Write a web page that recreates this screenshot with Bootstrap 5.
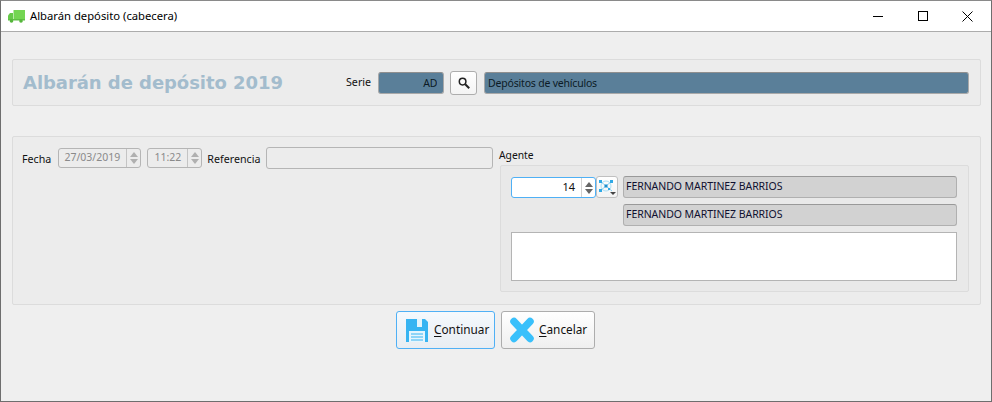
<!DOCTYPE html>
<html lang="es">
<head>
<meta charset="utf-8">
<title>Albarán depósito (cabecera)</title>
<link href="https://cdn.jsdelivr.net/npm/bootstrap@5.3.0/dist/css/bootstrap.min.css" rel="stylesheet">
<style>
html,body{height:100%;margin:0;background:#efefef}
body{font-family:"Noto Sans","Liberation Sans",sans-serif;font-size:10.7px;color:#111;overflow:hidden}
.win{width:992px;height:402px;border:1px solid #6e6e6e;border-top-color:#8a8a8a;background:#efefef}
.tbar{height:31px;background:#fff;border-bottom:1px solid #acacac;flex:none}
.tbar svg.ico{margin-left:7px;margin-right:5px}
.ttl{font-size:11.25px;color:#000}
.wbtn{width:45px;height:30px;background:none;border:0;padding:0}
.wgroup{margin-right:1px;margin-top:-2px}
.panel1{margin:27px 10px 0 11px;height:47px;border:1px solid #dcdcdc;border-radius:2px;background:#ececec;padding:0 11px 0 10px}
.hd{font-family:"DejaVu Sans",sans-serif;font-weight:700;font-size:18px;letter-spacing:-.05px;color:#a3bccd;width:323px;white-space:nowrap}
.fld{height:22px;border:1px solid #a9a9a9;border-top-color:#8f8f8f;border-radius:3px;padding:0 3px;font:inherit;color:#111;outline:0;min-width:0}
.blue{background:#5a7f99;color:#0c1b26;font-size:10.5px;letter-spacing:-.2px}
.serie{width:66px;text-align:right;padding-right:6px;margin-left:7px}
.sbtn{width:27px;height:24px;padding:0;margin:0 7px 0 6px;background:linear-gradient(#fff,#f4f4f4);border:1px solid #adadad;border-radius:3px;display:flex;align-items:center;justify-content:center}
.wide{flex:1 1 auto}
.panel2{margin:30px 10px 0 11px;height:169px;border:1px solid #dcdcdc;border-radius:2px;background:#ececec;padding:10px 12px 0 9px}
.left{width:476px;flex:none}
.spin{height:20px;border:1px solid #b5b5b5;border-radius:3px;background:#ececec;color:#8a8a8a;margin-top:1px;font-size:10.5px}
.spin span.val{flex:1;text-align:right;padding-right:6px;white-space:nowrap}
.arrows{width:14px;flex:none;border-left:1px solid #c4c4c4;height:100%;display:flex;flex-direction:column;align-items:center;justify-content:center;gap:2px}
.up{width:0;height:0;border-left:4.5px solid transparent;border-right:4.5px solid transparent;border-bottom:5px solid #b0b0b0}
.dn{width:0;height:0;border-left:4.5px solid transparent;border-right:4.5px solid transparent;border-top:5px solid #b0b0b0}
.date{width:83px;margin-left:7px}
.time{width:55px;margin-left:6px}
.ref{width:227px;margin-left:6px;background:#ececec;border-color:#b5b5b5;height:22px}
.ml5{margin-left:5px}
.right{width:470px;flex:none}
.agl{height:18px;margin-top:-1px;margin-left:1px;line-height:18px;font-size:10.3px}
.panel3{margin-top:1px;margin-left:2px;width:469px;height:127px;border:1px solid #dcdcdc;border-radius:2px;background:#e9e9e9;padding:10px 10px 0 10px}
.live{width:85px;height:21px;background:#fff;border:1px solid #4fb0f5;border-radius:3px;color:#111;margin-top:1px;font-size:11px}
.live .arrows{border-left-color:#d0d0d0}
.live .up,.live .dn{border-bottom-color:#666;border-top-color:#666}
.ibtn{width:22px;height:22px;margin-left:0;padding:0;background:linear-gradient(#fff,#f3f3f3);border:1px solid #c0c0c0;border-radius:3px;display:flex;align-items:center;justify-content:center}
.grey{background:#d2d2d2;color:#101030;height:22px;border:1px solid #b0b0b0;border-top-color:#999;font-size:10.5px;letter-spacing:-.06px;padding:0 1px 3px 2px;width:334px;flex:none}
.r1{margin-left:5px}
.r2{margin-left:112px;margin-top:6px}
.memo{display:block;margin-top:6px;width:446px;height:49px;background:#fff;border:1px solid #b4b4b4;resize:none;outline:0}
.acts{margin-top:6px;margin-left:-1px;gap:6px}
.bt{height:38px;padding:0;font:inherit;font-size:11.8px;color:#111;background:linear-gradient(#fff,#efefef);border:1px solid #adadad;border-radius:3px;display:flex;align-items:center}
.bt u{text-underline-offset:2px}
.bok{width:99px;border-color:#4fb0f5;background:linear-gradient(#f4f9fd,#e8edf2);padding-left:9px;gap:6px}
.bko{width:94px;padding-left:8px;gap:5px}
</style>
</head>
<body>
<div class="win d-flex flex-column">
  <div class="tbar d-flex align-items-center justify-content-between">
    <div class="d-flex align-items-center">
      <svg class="ico" width="17" height="13" viewBox="0 0 17 13"><rect x="5.500" y="0" width="11.500" height="9" fill="#74d552"/><path d="M2 3h3v6H0V5.500z" fill="#66c949"/><rect x="0" y="9" width="17" height="1.500" fill="#5fc043"/><circle cx="3.500" cy="11" r="1.800" fill="#55b63c"/><circle cx="13" cy="11" r="1.800" fill="#55b63c"/></svg>
      <span class="ttl">Albarán depósito (cabecera)</span>
    </div>
    <div class="d-flex wgroup">
      <button class="wbtn" aria-label="Minimizar"><svg width="10" height="10" viewBox="0 0 10 10"><path d="M0 5.500h10" stroke="#000"/></svg></button>
      <button class="wbtn" aria-label="Maximizar"><svg width="10" height="10" viewBox="0 0 10 10"><rect x=".5" y=".5" width="9" height="9" fill="none" stroke="#000"/></svg></button>
      <button class="wbtn" aria-label="Cerrar"><svg width="11" height="11" viewBox="0 0 11 11"><path d="M.5.5l10 10M10.500.5l-10 10" stroke="#000" fill="none"/></svg></button>
    </div>
  </div>

  <div class="panel1 d-flex align-items-center">
    <div class="hd">Albarán de depósito 2019</div>
    <span>Serie</span>
    <input class="fld blue serie" value="AD" readonly>
    <button class="sbtn" aria-label="Buscar"><svg width="12" height="12" viewBox="0 0 12 12"><circle cx="4.600" cy="4.600" r="3.300" fill="none" stroke="#222" stroke-width="1.500"/><path d="M7.200 7.200l4 4" stroke="#222" stroke-width="2"/></svg></button>
    <input class="fld blue wide" value="Depósitos de vehículos" readonly>
  </div>

  <div class="panel2 d-flex">
    <div class="left d-flex align-items-start">
      <span class="mt-1">Fecha</span>
      <div class="spin date d-flex align-items-center"><span class="val">27/03/2019</span><div class="arrows"><i class="up"></i><i class="dn"></i></div></div>
      <div class="spin time d-flex align-items-center"><span class="val">11:22</span><div class="arrows"><i class="up"></i><i class="dn"></i></div></div>
      <span class="ml5 mt-1">Referencia</span>
      <input class="fld ref" readonly>
    </div>
    <div class="right">
      <div class="agl">Agente</div>
      <div class="panel3">
        <div class="d-flex align-items-start">
          <div class="spin live d-flex align-items-center"><span class="val">14</span><div class="arrows"><i class="up"></i><i class="dn"></i></div></div>
          <button class="ibtn" aria-label="Agente"><svg width="20" height="18" viewBox="0 0 20 18"><circle cx="9" cy="8" r="5" fill="none" stroke="#a9def5"/><path d="M3 3l12 10M15 3L3 13" stroke="#8ad3f2"/><rect x="2" y="2" width="3" height="3" fill="#2fa9e6"/><rect x="13" y="2" width="3" height="3" fill="#2fa9e6"/><rect x="7.500" y="6.500" width="3" height="3" fill="#1c8fd0"/><rect x="2" y="11" width="3" height="3" fill="#2fa9e6"/><rect x="11" y="10" width="2" height="2" fill="#2fa9e6"/><path d="M13 14h6l-3 3z" fill="#444"/></svg></button>
          <input class="fld grey r1" value="FERNANDO MARTINEZ BARRIOS" readonly>
        </div>
        <input class="fld grey r2 d-block" value="FERNANDO MARTINEZ BARRIOS" readonly>
        <textarea class="memo" readonly aria-label="Notas"></textarea>
      </div>
    </div>
  </div>

  <div class="acts d-flex justify-content-center">
    <button class="bt bok"><svg width="22" height="23" viewBox="0 0 22 23"><path d="M0 0h19l3 3v20H0z" fill="#36b4f2"/><rect x="11" y="0" width="5" height="8" fill="#e4f5fd"/><rect x="3" y="12" width="16" height="11" fill="#e4f5fd"/><path d="M5 15h12M5 18h12M5 21h12" stroke="#36b4f2"/></svg><span><u>C</u>ontinuar</span></button>
    <button class="bt bko"><svg width="24" height="26" viewBox="0 0 24 26"><path d="M4 4.500l16 17M20 4.500l-16 17" stroke="#39c0fb" stroke-width="7.500" stroke-linecap="round"/></svg><span><u>C</u>ancelar</span></button>
  </div>
</div>
<script src="https://cdn.jsdelivr.net/npm/bootstrap@5.3.0/dist/js/bootstrap.bundle.min.js"></script>
</body>
</html>
